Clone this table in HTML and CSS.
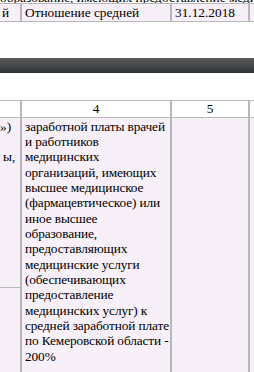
FILE: index.html
```html
<!DOCTYPE html>
<html>
<head>
<meta charset="utf-8">
<link rel="stylesheet" href="styles.css">
</head>
<body>
<div class="cut"><span>образование, имеющих предоставление медицинских услуг</span></div>
<table class="grid top">
  <tr>
    <td class="c1">й</td>
    <td class="c4 left">Отношение средней</td>
    <td class="c5 left">31.12.2018</td>
    <td class="c6"></td>
  </tr>
</table>
<div class="bar"></div>
<table class="grid main">
  <tr class="head">
    <td class="c1"></td>
    <td class="c4">4</td>
    <td class="c5">5</td>
    <td class="c6"></td>
  </tr>
  <tr class="body">
    <td class="c1 frag"><span class="f1">»)</span><br><br><span class="f2">ы,</span></td>
    <td class="c4 left tall" rowspan="2">заработной платы врачей и работников медицинских организаций, имеющих высшее медицинское (фармацевтическое) или иное высшее образование, предоставляющих медицинские услуги (обеспечивающих предоставление медицинских услуг) к средней заработной плате по Кемеровской области - 200%</td>
    <td class="c5" rowspan="2"></td>
    <td class="c6" rowspan="2"></td>
  </tr>
  <tr class="body">
    <td class="c1 rest"></td>
  </tr>
</table>
</body>
</html>
```
FILE: styles.css
```css
html, body {
  margin: 0;
  padding: 0;
  background: #ffffff;
  overflow: hidden;
}
body {
  width: 254px;
  height: 372px;
  font-family: "Liberation Serif", "Times New Roman", serif;
  font-size: 13.33px;
  color: #000;
}
.cut {
  height: 3px;
  overflow: hidden;
  white-space: nowrap;
  display: flex;
  align-items: flex-end;
}
.cut span {
  display: block;
  line-height: 10px;
  flex: none;
}
.grid {
  border-collapse: separate;
  border-spacing: 0;
  table-layout: fixed;
  width: 280px;
}
.grid td {
  box-sizing: border-box;
  border: 1px solid #b8b8b8;
  padding: 1px 3px;
  line-height: 15.33px;
  vertical-align: top;
  text-align: center;
  background: #f8f0f8;
}
.grid td.left {
  text-align: left;
}
.grid td.c1 {
  width: 21px;
  border-left: none;
  padding: 1px 0 1px 2px;
  text-align: left;
  overflow: hidden;
  white-space: nowrap;
}
.grid td.c4 { width: 150px; }
.grid td.c5 { width: 78px; }
.grid td.c6 { width: 31px; }
.grid td.tall {
  padding: 1px 0 1px 3px;
  letter-spacing: -0.12px;
}
.top td {
  height: 18px;
}
.bar {
  height: 15px;
  margin-top: 36px;
  background: linear-gradient(#5b5d5f, #2f3133);
}
.main {
  margin-top: 27px;
}
.main .head td {
  background: #ffffff;
  height: 16px;
  padding-top: 0;
  padding-bottom: 0;
}
.main .body td {
  border-top: none;
}
.frag {
  height: 170px;
}
.frag .f1 { margin-left: -2px; }
.frag .f2 { margin-left: 1px; }
.rest {
  height: 90px;
}
```
